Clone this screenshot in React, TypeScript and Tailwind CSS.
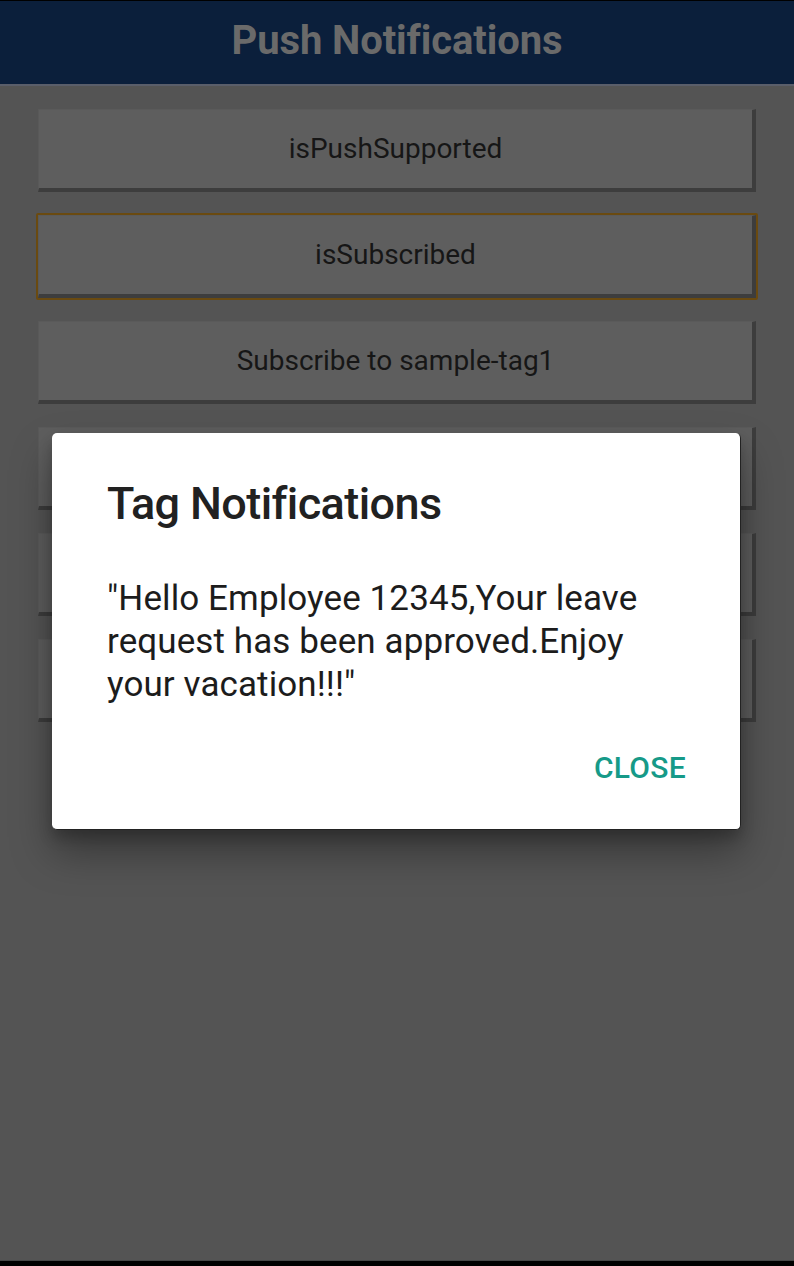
import React from "react";

const buttons = [
  "isPushSupported",
  "isSubscribed",
  "Subscribe to sample-tag1",
  "Unsubscribe from sample-tag1",
  "Subscribe to sample-tag2",
  "Unsubscribe from sample-tag2",
];

export default function App() {
  return (
    <div
      className="relative w-[794px] h-[1266px] overflow-hidden flex flex-col bg-[#545454]"
      style={{ fontFamily: "Roboto, 'Noto Sans', sans-serif" }}
    >
      <div className="h-px bg-black" />
      <header className="h-[85px] bg-[#0b1f3b] flex items-center justify-center border-b-2 border-[#5a5e6a]">
        <h1 className="text-[40px] leading-[48px] font-bold text-[#6a6a6a] tracking-[-0.1px] pb-[3px]">Push Notifications</h1>
      </header>
      <main className="flex-1 flex flex-col gap-[23px] pt-[23px] px-[38px]">
        {buttons.map((b, i) => (
          <div
            key={b}
            className={
              i === 1
                ? "h-[87px] -mx-[2px] -my-[2px] rounded-[2px] border-2 border-[#6a4a10] flex"
                : "h-[83px] flex"
            }
          >
            <div className="flex-1 flex items-center justify-center bg-[#5e5e5e] border-t border-l border-t-[#5a5a5a] border-l-[#595959] border-b-[4px] border-r-[4px] border-b-[#3d3d3d] border-r-[#3d3d3d] text-[28px] text-[#161616]">
              {i < 3 ? b : ""}
            </div>
          </div>
        ))}
      </main>
      <div className="h-[6px] bg-black border-t border-[#474747]" />

      <div className="absolute left-[52px] top-[433px] w-[689px] h-[397px] bg-white rounded-[5px] border-r border-b border-[#222] shadow-[0_22px_40px_rgba(0,0,0,0.35),0_8px_14px_rgba(0,0,0,0.2)] flex flex-col">
        <div className="pl-[55px] pt-[45px]">
          <h2 className="text-[45px] font-medium text-[#212121] leading-[52px] tracking-[-0.6px]">Tag Notifications</h2>
          <p className="mt-[47px] text-[35px] leading-[43px] text-[#1c1c1c] w-[572px] tracking-[0.1px]">
            "Hello Employee 12345,Your leave request has been approved.Enjoy your vacation!!!"
          </p>
        </div>
        <div className="flex justify-end pr-[54px] mt-[44px]">
          <span className="text-[30px] leading-[36px] font-medium text-[#169a88] tracking-[0.3px]">CLOSE</span>
        </div>
      </div>
    </div>
  );
}
